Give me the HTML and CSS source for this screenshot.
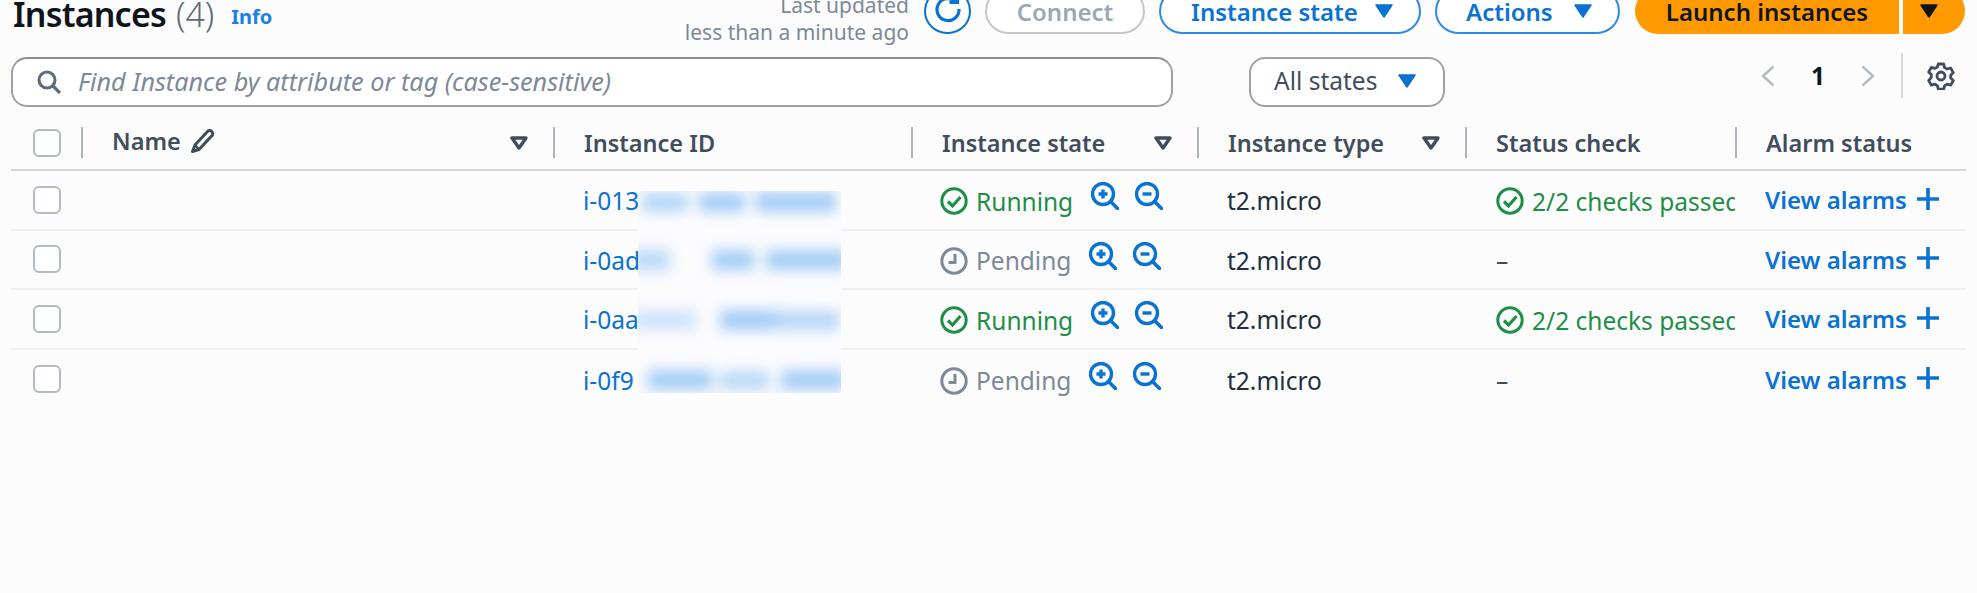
FILE: index.html
```html
<!DOCTYPE html>
<html lang="en">
<head>
<meta charset="utf-8">
<title>Instances</title>
<link rel="stylesheet" href="styles.css">
</head>
<body>
<svg class="defs" width="0" height="0" aria-hidden="true">
  <symbol id="caret" viewBox="0 0 18 14"><path d="M1 1h16L9 13z" fill="currentColor" stroke="currentColor" stroke-width="1.5" stroke-linejoin="round"/></symbol>
  <symbol id="filter" viewBox="0 0 18 14"><path d="M2 2h14L9 12z" fill="none" stroke="currentColor" stroke-width="3.400" stroke-linejoin="round"/></symbol>
  <symbol id="ok" viewBox="0 0 28 28"><circle cx="14" cy="14" r="12.2" fill="none" stroke="currentColor" stroke-width="3"/><path d="M8 14.5l4.5 4.5 8-9" fill="none" stroke="currentColor" stroke-width="3.200"/></symbol>
  <symbol id="clock" viewBox="0 0 28 28"><circle cx="14" cy="14" r="12.2" fill="none" stroke="currentColor" stroke-width="3"/><path d="M15 7v8.500H8.500" fill="none" stroke="currentColor" stroke-width="3"/></symbol>
  <symbol id="zin" viewBox="0 0 28 28"><circle cx="12" cy="12" r="10.500" fill="none" stroke="currentColor" stroke-width="3.400"/><path d="M19.500 19.500l7 7" stroke="currentColor" stroke-width="3.600" stroke-linecap="round"/><path d="M7.500 12h9M12 7.500v9" stroke="currentColor" stroke-width="3.400"/></symbol>
  <symbol id="zout" viewBox="0 0 28 28"><circle cx="12" cy="12" r="10.500" fill="none" stroke="currentColor" stroke-width="3.400"/><path d="M19.500 19.500l7 7" stroke="currentColor" stroke-width="3.600" stroke-linecap="round"/><path d="M7.500 12h9" stroke="currentColor" stroke-width="3.400"/></symbol>
  <symbol id="plus" viewBox="0 0 22 22"><path d="M11 0v22M0 11h22" stroke="currentColor" stroke-width="3.600"/></symbol>
</svg>

<header class="topbar">
  <h1 class="title">Instances <span class="count">(4)</span></h1>
  <a class="info">Info</a>
  <div class="actions">
    <p class="updated">Last updated<br>less than a minute ago</p>
    <button class="btn refresh" aria-label="Refresh">
      <svg width="28" height="28" viewBox="0 0 28 28"><path d="M21.500 6.500A11 11 0 1 0 25 14" fill="none" stroke="currentColor" stroke-width="3.200"/><path d="M15.500 7.500h8v-8" fill="none" stroke="currentColor" stroke-width="3.200"/></svg>
    </button>
    <button class="btn connect">Connect</button>
    <button class="btn primary state-btn">Instance state<svg class="caret-icon"><use href="#caret"/></svg></button>
    <button class="btn primary actions-btn">Actions<svg class="caret-icon"><use href="#caret"/></svg></button>
    <div class="split">
      <button class="launch">Launch instances</button>
      <button class="launch-more" aria-label="More"><svg class="caret-icon"><use href="#caret"/></svg></button>
    </div>
  </div>
</header>

<section class="toolbar">
  <div class="search">
    <svg width="24" height="24" viewBox="0 0 24 24"><circle cx="10" cy="10" r="8" fill="none" stroke="currentColor" stroke-width="3"/><path d="M16 16l7 7" stroke="currentColor" stroke-width="3.200"/></svg>
    <span class="placeholder">Find Instance by attribute or tag (case-sensitive)</span>
  </div>
  <button class="states">All states<svg class="caret-icon"><use href="#caret"/></svg></button>
  <nav class="pager">
    <svg class="chev" width="14" height="22" viewBox="0 0 14 22"><path d="M12.500 1.500L2 11l10.500 9.500" fill="none" stroke="currentColor" stroke-width="2.400"/></svg>
    <span class="page-num">1</span>
    <svg class="chev" width="14" height="22" viewBox="0 0 14 22"><path d="M1.500 1.500L12 11 1.500 20.500" fill="none" stroke="currentColor" stroke-width="2.400"/></svg>
    <span class="pager-sep"></span>
    <svg class="gear" width="28" height="28" viewBox="0 0 28 28"><path d="M11.300 2h5.400l.9 3.600 2.500 1.400 3.500-1 2.700 4.600-2.600 2.600v2.800l2.600 2.600-2.700 4.600-3.500-1-2.500 1.400-.9 3.600h-5.400l-.9-3.600-2.500-1.400-3.500 1-2.700-4.600L4.300 15.400v-2.800L1.700 10l2.700-4.600 3.500 1 2.500-1.400z" fill="none" stroke="currentColor" stroke-width="2.800" stroke-linejoin="round"/><circle cx="14" cy="14" r="4" fill="none" stroke="currentColor" stroke-width="2.800"/></svg>
  </nav>
</section>

<section class="table">
  <div class="row head">
    <div class="hcell check-cell"><span class="box"></span></div>
    <div class="hcell name-col"><span class="name-label">Name<svg width="26" height="24" viewBox="0 0 26 24"><path d="M6 16L18.500 2.500a3 3 0 0 1 4.300 0 3 3 0 0 1 0 4.300L10 20.500l-6.500 2z" fill="none" stroke="currentColor" stroke-width="3" stroke-linejoin="round"/><path d="M6 16l4 4.500" stroke="currentColor" stroke-width="2.600"/></svg></span><svg class="filter-icon"><use href="#filter"/></svg></div>
    <div class="hcell">Instance ID</div>
    <div class="hcell">Instance state<svg class="filter-icon"><use href="#filter"/></svg></div>
    <div class="hcell">Instance type<svg class="filter-icon"><use href="#filter"/></svg></div>
    <div class="hcell">Status check</div>
    <div class="hcell">Alarm status</div>
  </div>

  <div class="row body-row">
    <div class="cell check-cell"><span class="box"></span></div>
    <div class="cell"></div>
    <div class="cell id-cell"><a class="link">i-013</a></div>
    <div class="cell state-cell">
      <span class="status running"><svg class="status-icon"><use href="#ok"/></svg>Running</span>
      <svg class="zoom-icon"><use href="#zin"/></svg><svg class="zoom-icon"><use href="#zout"/></svg>
    </div>
    <div class="cell type-cell">t2.micro</div>
    <div class="cell check-status"><span class="status running"><svg class="status-icon"><use href="#ok"/></svg>2/2 checks passed</span></div>
    <div class="cell alarm-cell"><a class="alarm">View alarms</a><svg class="plus-icon"><use href="#plus"/></svg></div>
  </div>

  <div class="row body-row">
    <div class="cell check-cell"><span class="box"></span></div>
    <div class="cell"></div>
    <div class="cell id-cell"><a class="link">i-0ad</a></div>
    <div class="cell state-cell">
      <span class="status pending"><svg class="status-icon"><use href="#clock"/></svg>Pending</span>
      <svg class="zoom-icon"><use href="#zin"/></svg><svg class="zoom-icon"><use href="#zout"/></svg>
    </div>
    <div class="cell type-cell">t2.micro</div>
    <div class="cell check-status"><span class="dash">–</span></div>
    <div class="cell alarm-cell"><a class="alarm">View alarms</a><svg class="plus-icon"><use href="#plus"/></svg></div>
  </div>

  <div class="row body-row">
    <div class="cell check-cell"><span class="box"></span></div>
    <div class="cell"></div>
    <div class="cell id-cell"><a class="link">i-0aa</a></div>
    <div class="cell state-cell">
      <span class="status running"><svg class="status-icon"><use href="#ok"/></svg>Running</span>
      <svg class="zoom-icon"><use href="#zin"/></svg><svg class="zoom-icon"><use href="#zout"/></svg>
    </div>
    <div class="cell type-cell">t2.micro</div>
    <div class="cell check-status"><span class="status running"><svg class="status-icon"><use href="#ok"/></svg>2/2 checks passed</span></div>
    <div class="cell alarm-cell"><a class="alarm">View alarms</a><svg class="plus-icon"><use href="#plus"/></svg></div>
  </div>

  <div class="row body-row last">
    <div class="cell check-cell"><span class="box"></span></div>
    <div class="cell"></div>
    <div class="cell id-cell"><a class="link">i-0f9</a></div>
    <div class="cell state-cell">
      <span class="status pending"><svg class="status-icon"><use href="#clock"/></svg>Pending</span>
      <svg class="zoom-icon"><use href="#zin"/></svg><svg class="zoom-icon"><use href="#zout"/></svg>
    </div>
    <div class="cell type-cell">t2.micro</div>
    <div class="cell check-status"><span class="dash">–</span></div>
    <div class="cell alarm-cell"><a class="alarm">View alarms</a><svg class="plus-icon"><use href="#plus"/></svg></div>
  </div>

  <svg class="redaction" width="203" height="202" viewBox="0 0 203 202" aria-hidden="true">
    <defs><filter id="soft" x="-30%" y="-100%" width="160%" height="300%"><feGaussianBlur stdDeviation="7"/></filter></defs>
    <rect width="203" height="202" fill="#fcfcfe"/>
    <g filter="url(#soft)" fill="#a3ccf5">
      <rect x="4" y="2" width="46" height="19" opacity=".8"/><rect x="61" y="2" width="46" height="19"/><rect x="118" y="1" width="80" height="20"/>
      <rect x="-6" y="59" width="38" height="20" opacity=".75"/><rect x="74" y="59" width="42" height="20"/><rect x="128" y="59" width="80" height="20"/>
      <rect x="-6" y="120" width="64" height="18" opacity=".55"/><rect x="82" y="119" width="58" height="20"/><rect x="141" y="120" width="60" height="19" opacity=".8"/>
      <rect x="10" y="179" width="64" height="20"/><rect x="82" y="180" width="49" height="19" opacity=".75"/><rect x="143" y="179" width="64" height="20"/>
    </g>
  </svg>
</section>
</body>
</html>
```

FILE: styles.css
```css
* { box-sizing: border-box; }
html, body { height: 100%; }
body {
  margin: 0;
  padding: 0 11px;
  overflow: hidden;
  background: #fcfcfd;
  color: #414d5c;
  font-family: "Noto Sans", "Open Sans", sans-serif;
  font-size: 24.5px;
}
.defs { position: absolute; }
button { font: inherit; background: none; margin: 0; padding: 0; }

/* top bar: content is clipped by the top of the window */
.topbar { display: flex; align-items: flex-end; height: 34px; }
.title { margin: 0 0 0 2px; font-size: 34px; line-height: 40px; font-weight: 600; letter-spacing: -.8px; color: #0f141a; white-space: nowrap; }
.count { font-weight: 300; letter-spacing: 0; color: #5f6b7a; margin-left: 2px; }
.info { margin-left: 17px; margin-bottom: 3px; font-size: 20px; line-height: 28px; font-weight: 700; color: #1a7fe8; }
.actions { display: flex; align-items: flex-end; margin-left: auto; margin-right: 1px; gap: 14px; }
.updated { margin: 0 1px -12px 0; text-align: right; font-size: 21px; line-height: 27px; color: #7d8998; white-space: nowrap; }

.btn { display: flex; align-items: center; justify-content: center; height: 46px; border-radius: 23px; border: 2px solid #c6c6cd; font-size: 24px; font-weight: 600; white-space: nowrap; background: #fff; }
.refresh { width: 47px; border-color: #0972d3; color: #0972d3; }
.refresh svg { margin-top: -4px; }
.connect { width: 160px; color: #9ba7b6; }
.primary { color: #0972d3; border-color: #2e8ae6; justify-content: space-between; }
.state-btn { width: 262px; padding: 0 26px 0 30px; }
.actions-btn { width: 185px; padding: 0 26px 0 29px; }
.caret-icon { width: 18px; height: 14px; }

.split { display: flex; gap: 4px; margin-left: 1px; }
.launch, .launch-more { height: 46px; border: 0; background: #ff9900; color: #0f141a; font-size: 24px; font-weight: 600; display: flex; align-items: center; }
.launch { width: 264px; justify-content: center; border-radius: 23px 0 0 23px; white-space: nowrap; }
.launch-more { width: 62px; padding-left: 17px; border-radius: 0 23px 23px 0; }

/* toolbar */
.toolbar { display: flex; align-items: flex-start; margin-top: 23px; height: 50px; }
.search { display: flex; align-items: center; gap: 17px; width: 1162px; height: 50px; padding-left: 24px; border: 2px solid #a0a0a8; border-top-color: #8c8c94; border-radius: 16px; background: #fff; color: #5f6b7a; }
.placeholder { font-style: italic; font-size: 25.2px; color: #7d8998; white-space: nowrap; padding-bottom: 2px; }
.states { display: flex; align-items: center; gap: 21px; width: 196px; height: 50px; margin-left: 76px; padding: 0 0 3px 23px; border: 2px solid #a0a0a8; border-radius: 16px; background: #fff; color: #414d5c; }
.states .caret-icon { color: #0972d3; }
.state-btn .caret-icon, .actions-btn .caret-icon { color: #0972d3; }

.pager { display: flex; align-items: center; height: 45px; margin: -4px 0 0 auto; padding-right: 11px; }
.chev { color: #b4bac2; }
.page-num { width: 86px; text-align: center; font-weight: 700; color: #0f141a; }
.pager-sep { width: 2px; height: 45px; margin: 0 24px 0 26px; background: #d5d8df; }
.gear { color: #414d5c; }

/* table */
.table { position: relative; }
.row { display: grid; grid-template-columns: 70px 472px 358px 286px 268px 270px 231px; }
.head { height: 64px; padding-top: 20px; border-bottom: 2px solid #d5d8df; font-weight: 600; font-size: 23.5px; }
.hcell { display: flex; align-items: center; justify-content: space-between; height: 31px; padding: 0 25px 0 29px; border-left: 2px solid #aeb4bc; white-space: nowrap; }
.check-cell { border-left: 0; padding: 0 0 0 22px; }
.name-label { display: flex; align-items: center; gap: 8px; margin-top: -3px; }
.filter-icon { width: 18px; height: 14px; color: #414d5c; }

.body-row { height: 59.5px; border-bottom: 2px solid #eef0f3; color: #16191f; }
.body-row.last { border-bottom: 0; }
.cell { display: flex; align-items: center; min-width: 0; padding-left: 30px; white-space: nowrap; }
.check-cell.cell { padding-left: 22px; }
.box { width: 28px; height: 28px; border: 2px solid #b4bac2; border-radius: 6px; background: #fff; }
.link { color: #0972d3; padding-top: 2px; }
.state-cell { padding-left: 29px; }
.status { display: inline-flex; align-items: center; gap: 8px; padding-top: 3px; }
.status-icon { width: 28px; height: 28px; }
.running { color: #1d8f46; }
.pending { color: #7d8998; }
.zoom-icon { width: 28px; height: 28px; margin: -7px 0 0 16px; color: #0972d3; }
.zoom-icon:first-of-type { margin-left: 18px; }
.type-cell { color: #232f3e; padding-top: 2px; }
.check-status { padding-left: 31px; padding-right: 2px; overflow: hidden; }
.dash { color: #414d5c; padding-top: 3px; }
.alarm-cell { gap: 10px; }
.alarm { color: #0972d3; font-size: 24px; font-weight: 600; }
.plus-icon { width: 22px; height: 22px; color: #0972d3; margin-top: -2px; }

.redaction { position: absolute; left: 627px; top: 84px; }
```
